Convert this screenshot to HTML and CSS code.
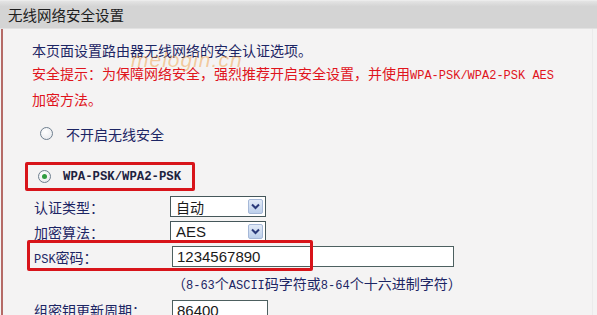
FILE: index.html
```html
<!DOCTYPE html>
<html lang="zh-CN">

<head>
    <meta charset="UTF-8">
    <title>无线网络安全设置</title>
    <link rel="stylesheet" href="styles.css">
</head>

<body>
    <div class="header">无线网络安全设置</div>

    <div class="panel">
        <span class="watermark">melogin.cn</span>

        <p class="intro">
            本页面设置路由器无线网络的安全认证选项。<br>
            <span class="warn">安全提示：为保障网络安全，强烈推荐开启安全设置，并使用<span class="en">WPA-PSK/WPA2-PSK AES</span><br>加密方法。</span>
        </p>

        <label class="option off">
            <span class="radio"></span>
            <span>不开启无线安全</span>
        </label>

        <div class="highlight">
            <label class="option on">
                <span class="radio checked"></span>
                <span class="en">WPA-PSK/WPA2-PSK</span>
            </label>
        </div>

        <div class="form">
            <div class="row">
                <span class="label">认证类型：</span>
                <div class="select"><span>自动</span><span class="arrow"><svg width="9" height="7" viewBox="0 0 9 7"><path d="M1 1.5 L4.5 5 L8 1.5" fill="none" stroke="#2a3a7a" stroke-width="2"/></svg></span></div>
            </div>
            <div class="row">
                <span class="label">加密算法：</span>
                <div class="select"><span class="latin">AES</span><span class="arrow"><svg width="9" height="7" viewBox="0 0 9 7"><path d="M1 1.5 L4.5 5 L8 1.5" fill="none" stroke="#2a3a7a" stroke-width="2"/></svg></span></div>
            </div>
            <div class="row psk">
                <span class="label"><span class="en">PSK</span>密码：</span>
                <div class="input wide">1234567890</div>
                <span class="mark"></span>
            </div>
            <div class="row hint">
                <span></span>
                <span class="note">（<span class="en">8-63</span>个<span class="en">ASCII</span>码字符或<span class="en">8-64</span>个十六进制字符）</span>
            </div>
            <div class="row">
                <span class="label">组密钥更新周期：</span>
                <div class="input short">86400</div>
            </div>
        </div>
    </div>
</body>

</html>
```

FILE: styles.css
```css
* {
    margin: 0;
    padding: 0;
    box-sizing: border-box;
}

body {
    width: 597px;
    height: 315px;
    overflow: hidden;
    background: #f4f3f3;
    font-family: 'Noto Sans CJK SC', sans-serif;
    font-size: 14px;
    color: #1c2564;
}

/* Title bar */
.header {
    height: 29px;
    line-height: 28px;
    padding-left: 8px;
    font-size: 14.5px;
    color: #1e1e1e;
    background: linear-gradient(#e4e4e4, #d4d4d4 20%, #d4d4d4);
    border-top: 1px solid #ececec;
    border-bottom: 1px solid #e2e2e2;
}

/* Content area */
.panel {
    position: relative;
    margin-left: 1px;
    height: 286px;
    padding: 10px 0 0 29px;
    border-left: 2px solid #b56a66;
    border-right: 1px solid #ebebeb;
    margin-right: 4px;
}

.en {
    font-family: 'Liberation Mono', monospace;
    font-size: 12px;
}

.latin {
    font-family: 'Liberation Sans', sans-serif;
    font-size: 15px;
}

.intro {
    line-height: 23px;
}

.warn {
    color: #e0141c;
}

.watermark {
    position: absolute;
    left: 128px;
    top: 19px;
    font-family: 'Liberation Sans', sans-serif;
    font-size: 21px;
    font-style: italic;
    color: rgba(240, 150, 50, 0.45);
    letter-spacing: 1px;
}

/* Radio options */
.option {
    display: flex;
    align-items: center;
    height: 23px;
}

.option.off {
    margin-top: 11px;
    padding-left: 8px;
    gap: 13px;
}

.option.on {
    gap: 12px;
}

.option.on .en {
    font-size: 12.3px;
    font-weight: bold;
    color: #1c2240;
}

.radio {
    width: 13px;
    height: 13px;
    border-radius: 50%;
    border: 1px solid #6f7f8f;
    background: radial-gradient(circle at 40% 35%, #ffffff, #e4e6ea);
    position: relative;
}

.radio.checked::after {
    content: '';
    position: absolute;
    left: 3px;
    top: 3px;
    width: 5px;
    height: 5px;
    border-radius: 50%;
    background: #2f9c40;
}

.highlight {
    width: fit-content;
    margin: 17px 0 0 -7px;
    padding: 0 11px 0 10px;
    border: 3px solid #d8141a;
    border-radius: 2px;
}

/* Form rows */
.form {
    padding-top: 3px;
}

.row {
    display: grid;
    grid-template-columns: 136px auto;
    align-items: center;
    height: 25px;
    padding-left: 2px;
}

.row.psk {
    position: relative;
}

.row.hint {
    height: 28px;
}

.row:last-child {
    height: 26px;
}

.label {
    color: #1c2564;
}

.select {
    display: flex;
    align-items: center;
    justify-content: space-between;
    width: 96px;
    height: 21px;
    padding: 0 2px 0 5px;
    background: #fff;
    border: 1px solid #45575a;
    color: #1a1a1a;
}

.arrow {
    display: flex;
    align-items: center;
    justify-content: center;
    width: 15px;
    height: 15px;
    border: 1px solid #a5b8d8;
    border-radius: 2px;
    background: linear-gradient(#e2ebf8, #bccfeb);
}

.input {
    height: 21px;
    margin-left: 2px;
    padding-left: 4px;
    line-height: 19px;
    background: #fff;
    border: 1px solid #4d6060;
    font-family: 'Liberation Sans', sans-serif;
    font-size: 15px;
    color: #1a1a1a;
}

.input.wide {
    width: 282px;
}

.input.short {
    width: 96px;
}

.note {
    margin-left: 2px;
    white-space: nowrap;
}

/* Annotation box over the PSK row */
.mark {
    position: absolute;
    left: -5px;
    top: -4px;
    width: 286px;
    height: 31px;
    border: 3px solid #d8141a;
    border-radius: 2px;
}
```
